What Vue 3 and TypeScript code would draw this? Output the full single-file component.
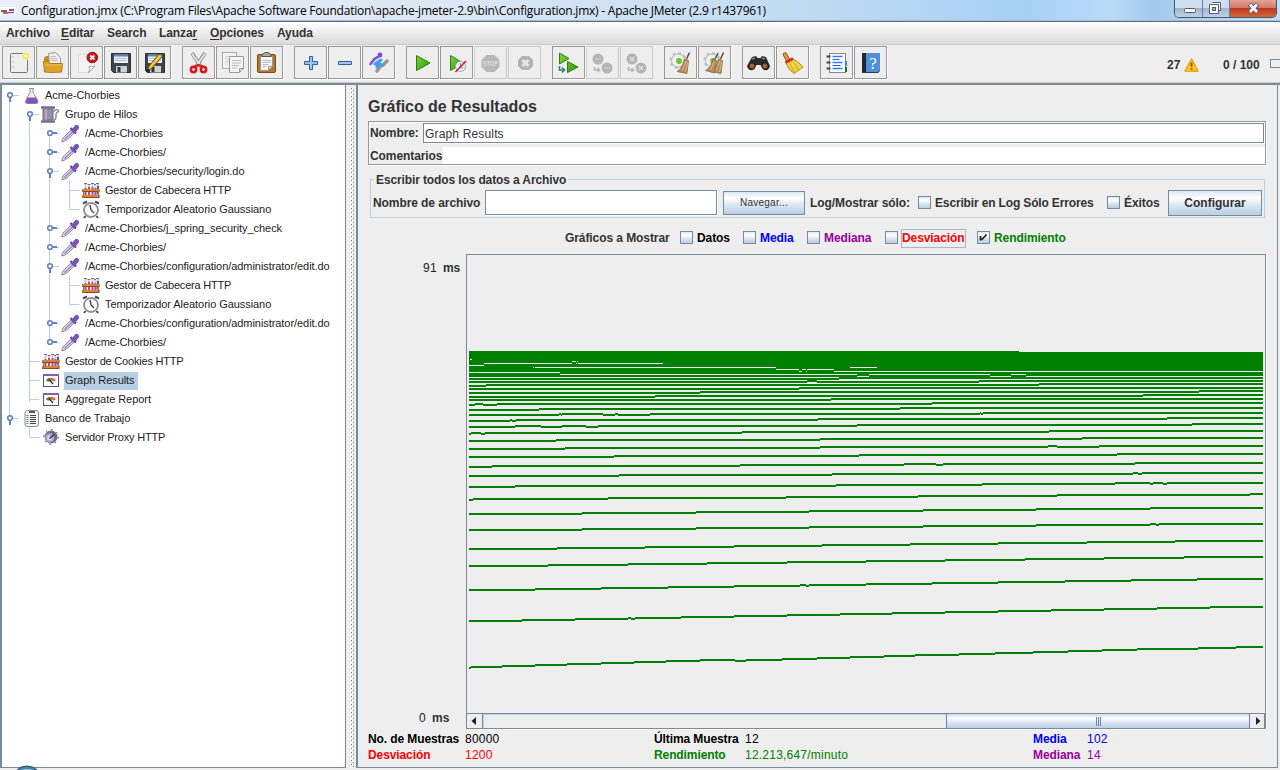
<script setup lang="ts">
type Step = [number, number]

const menus = [
  { pre: '', key: '', post: 'Archivo', w: 54 },
  { pre: '', key: 'E', post: 'ditar', w: 46 },
  { pre: '', key: '', post: 'Search', w: 52 },
  { pre: 'Lanza', key: 'r', post: '', w: 51 },
  { pre: '', key: 'O', post: 'pciones', w: 67 },
  { pre: '', key: '', post: 'Ayuda', w: 50 },
]

const toolGroups: { name: string; off?: boolean }[][] = [
  [{ name: 'new' }, { name: 'open' }, { name: 'close' }, { name: 'save' }, { name: 'saveas' }],
  [{ name: 'cut' }, { name: 'copy' }, { name: 'paste' }],
  [{ name: 'plus' }, { name: 'minus' }, { name: 'toggle' }],
  [{ name: 'start' }, { name: 'startnt' }, { name: 'stop', off: true }, { name: 'shutdown', off: true }],
  [{ name: 'rstart' }, { name: 'rstop', off: true }, { name: 'rshut', off: true }],
  [{ name: 'clear' }, { name: 'clearall' }],
  [{ name: 'search' }, { name: 'broom' }],
  [{ name: 'func' }, { name: 'help' }],
]

interface Node { d: number; icon: string; label: string; handle?: 'open' | 'closed'; sel?: boolean; tight?: boolean }
const nodes: Node[] = [
  { d: 0, icon: 'flask', label: 'Acme-Chorbies', handle: 'open' },
  { d: 1, icon: 'spool', label: 'Grupo de Hilos', handle: 'open' },
  { d: 2, icon: 'dropper', label: '/Acme-Chorbies', handle: 'closed' },
  { d: 2, icon: 'dropper', label: '/Acme-Chorbies/', handle: 'closed' },
  { d: 2, icon: 'dropper', label: '/Acme-Chorbies/security/login.do', handle: 'open' },
  { d: 3, icon: 'tubes', label: 'Gestor de Cabecera HTTP', tight: true },
  { d: 3, icon: 'clock', label: 'Temporizador Aleatorio Gaussiano' },
  { d: 2, icon: 'dropper', label: '/Acme-Chorbies/j_spring_security_check', handle: 'closed' },
  { d: 2, icon: 'dropper', label: '/Acme-Chorbies/', handle: 'closed' },
  { d: 2, icon: 'dropper', label: '/Acme-Chorbies/configuration/administrator/edit.do', handle: 'open' },
  { d: 3, icon: 'tubes', label: 'Gestor de Cabecera HTTP', tight: true },
  { d: 3, icon: 'clock', label: 'Temporizador Aleatorio Gaussiano' },
  { d: 2, icon: 'dropper', label: '/Acme-Chorbies/configuration/administrator/edit.do', handle: 'closed' },
  { d: 2, icon: 'dropper', label: '/Acme-Chorbies/', handle: 'closed' },
  { d: 1, icon: 'tubes', label: 'Gestor de Cookies HTTP', tight: true },
  { d: 1, icon: 'gauge', label: 'Graph Results', sel: true },
  { d: 1, icon: 'gauge', label: 'Aggregate Report' },
  { d: 0, icon: 'bench', label: 'Banco de Trabajo', handle: 'open' },
  { d: 1, icon: 'proxy', label: 'Servidor Proxy HTTP', tight: true },
]
const rowY = (i: number) => i * 19 + 9

const checks = [
  { label: 'Datos', color: 'black', w: 46 },
  { label: 'Media', color: 'blue', w: 47 },
  { label: 'Mediana', color: 'purple', w: 61 },
  { label: 'Desviación', color: 'red', w: 75, focus: true },
  { label: 'Rendimiento', color: 'green', w: 90, on: true },
]

const stats = [
  [['No. de Muestras', '80000', 'black'], ['Última Muestra', '12', 'black'], ['Media', '102', 'blue']],
  [['Desviación', '1200', 'red'], ['Rendimiento', '12.213,647/minuto', 'green'], ['Mediana', '14', 'purple']],
]

// Each trace: [start x, top y] pairs, extended to the right edge of the plot.
const even = (y0: number, y1: number): Step[] =>
  Array.from({ length: y0 - y1 + 1 }, (_, k) => [469 + Math.round((k * 794) / (y0 - y1 + 1)), y0 - k] as Step)
// Inserts a short one-pixel dip into a trace.
const dip = (t: Step[], x: number, w: number): Step[] => {
  const before = t.filter(s => s[0] < x)
  const y = before[before.length - 1][1]
  return [...before, [x, y + 1], [x + w, y], ...t.filter(s => s[0] > x + w)]
}
const traces: Step[][] = [
  [[469, 378], [839, 377]],
  [[469, 381], [807, 380], [817, 381], [979, 380]],
  [[469, 385], [486, 384], [1039, 383]],
  [[469, 388], [799, 387]],
  [[469, 392], [700, 391], [1199, 390]],
  [[469, 396], [655, 395], [1143, 394]],
  [[469, 399], [831, 398]],
  [[469, 404], [475, 403], [483, 404], [497, 403], [932, 402]],
  [[469, 409], [539, 408], [900, 407]],
  [[469, 414], [559, 413], [561, 414], [562, 413], [603, 414], [615, 413], [618, 414], [650, 413], [980, 412], [981, 413], [983, 412]],
  [[469, 420], [510, 419], [512, 420], [516, 419], [818, 418], [1167, 417]],
  [[469, 426], [515, 425], [541, 426], [562, 425], [586, 426], [598, 425], [857, 424], [1192, 423]],
  [[469, 433], [471, 432], [481, 433], [485, 432], [742, 431], [1049, 430]],
  [[469, 440], [556, 439], [820, 438], [1082, 437]],
  [[469, 448], [565, 447], [820, 446], [1048, 445], [1057, 446], [1099, 445]],
  [[469, 456], [614, 455], [859, 454], [1117, 453]],
  [[469, 466], [492, 465], [740, 464], [904, 463], [936, 464], [943, 463], [1135, 462]],
  [[469, 475], [619, 474], [832, 473], [1133, 472], [1138, 473], [1142, 472]],
  [[469, 486], [515, 485], [836, 484], [982, 483], [1115, 482], [1150, 483], [1153, 482], [1163, 483], [1167, 482]],
  [[469, 499], [473, 498], [608, 497], [786, 496], [918, 495], [1057, 494], [1250, 493]],
  even(513, 507), dip(even(529, 523), 1156, 3), even(548, 540), even(565, 556), dip(even(589, 578), 806, 3), dip(even(620, 606), 631, 4),
  [[469, 667], [471, 666], [502, 665], [535, 664], [567, 663], [601, 662], [634, 661], [666, 660], [700, 659], [735, 660], [746, 659], [782, 658], [817, 657], [850, 656], [884, 655], [915, 654], [959, 653], [995, 652], [1033, 651], [1068, 650], [1102, 649], [1137, 648], [1198, 647], [1236, 646]],
]
const segments = traces.flatMap(t =>
  t.map(([x, y], i) => ({ x: x - 467, y: y - 255, w: (i + 1 < t.length ? t[i + 1][0] : 1263) - x })))
const gaps: [number, number, number][] = [
  [470, 359, 2], [572, 361, 4], [577, 361, 1], [484, 363, 88], [576, 363, 1], [578, 363, 85], [469, 365, 15],
  [533, 367, 1], [535, 367, 241], [850, 367, 27], [776, 369, 23], [802, 369, 4], [807, 369, 27],
  [799, 371, 3], [806, 371, 1], [834, 371, 429], [469, 372, 91], [560, 374, 297], [869, 374, 121], [1011, 374, 15],
  [857, 376, 12], [990, 376, 21], [1026, 376, 237],
]
</script>

<template>
  <div class="window">
    <header class="titlebar">
      <svg class="feather" width="16" height="8" viewBox="0 0 16 8"><rect width="16" height="8" fill="#fff" /><path d="M1 4h6M9 3h5" stroke="#333" stroke-width="1.4" /><path d="M3 6h5" stroke="#d22" stroke-width="1.5" /><path d="M8 5.5h6" stroke="#a3c" stroke-width="1.3" /></svg>
      <span class="caption">Configuration.jmx (C:\Program Files\Apache Software Foundation\apache-jmeter-2.9\bin\Configuration.jmx) - Apache JMeter (2.9 r1437961)</span>
      <div class="winbtns">
        <i class="wb min"><svg width="29" height="17"><rect x="9.5" y="8.5" width="11" height="4" rx="1" fill="#fff" stroke="#555a6e" /></svg></i>
        <i class="wb max"><svg width="27" height="17"><path d="M9.500 2.500h8v8h-2M7.500 4.500h8v9h-9v-9z" fill="#fff" stroke="#555a6e" /><rect x="9.500" y="7.500" width="3" height="3" fill="#9db6d2" stroke="#555a6e" /></svg></i>
        <i class="wb cls"><svg width="47" height="17"><path d="M19.500 4l8 8.500M27.500 4l-8 8.500" stroke="#555a6e" stroke-width="4.600" /><path d="M20 4.500l7 7.500M27 4.500l-7 7.500" stroke="#fff" stroke-width="2.600" /></svg></i>
      </div>
    </header>

    <nav class="menubar">
      <span v-for="m in menus" :key="m.post + m.pre" class="menu" :style="{ width: m.w + 'px' }">{{ m.pre }}<u v-if="m.key">{{ m.key }}</u>{{ m.post }}</span>
    </nav>

    <div class="toolbar">
      <div v-for="(g, gi) in toolGroups" :key="gi" class="group">
        <div v-for="t in g" :key="t.name" class="tool" :class="{ off: t.off }">
          <svg width="33" height="33" viewBox="0 0 33 33" fill="none">
            <template v-if="t.name === 'new'">
              <rect x="8.500" y="7.500" width="17" height="19" rx="1" fill="#eee" stroke="#777" /><path d="M11 10v14" stroke="#bbb" stroke-dasharray="2 3" /><circle cx="24" cy="10" r="4" fill="#f7f19a" /><circle cx="24" cy="10" r="2.200" fill="#fffff0" stroke="#e6d935" />
            </template>
            <template v-else-if="t.name === 'open'">
              <path d="M8 12l2-2h4v6H8z" fill="#c48a1c" /><path d="M12.500 7.500l7-1 5 5v8h-11z" fill="#eee" stroke="#999" /><path d="M14.500 10.500h5M14.500 12.500h7M14.500 14.500h7" stroke="#bbb" /><path d="M7.500 15.500h4l2 2h13l-1 8.500q-8 1-17 0z" fill="#dfa32c" stroke="#b67b12" /><path d="M9 19h16.500" stroke="#efc15c" />
            </template>
            <template v-else-if="t.name === 'close'">
              <path d="M8.500 8.500h16v12l-5 6h-11z" fill="#f3f3f3" stroke="#ddd" /><path d="M25 20q-2 1-6 .500 1.500 3-.500 6z" fill="#fff" stroke="#aaa" /><circle cx="22.300" cy="11.500" r="5.300" fill="#c91717" stroke="#9d1111" /><path d="M20.300 9.500l4 4m0-4l-4 4" stroke="#fff" stroke-width="1.800" />
            </template>
            <template v-else-if="t.name === 'save' || t.name === 'saveas'">
              <path d="M7.500 7.500h19v19h-17l-2-2z" fill="#3d444b" stroke="#2b3035" /><rect x="10" y="8" width="14" height="9" fill="#e9eff4" /><rect x="10" y="8" width="14" height="2.500" fill="#5c84ad" /><path d="M11 12.500h12M11 14.500h12" stroke="#b9c1c8" /><rect x="12" y="20" width="11" height="6.500" fill="#cfd2d4" /><rect x="13.500" y="21" width="3" height="5" fill="#30363b" />
              <template v-if="t.name === 'saveas'"><path d="M9 25l2-5L21 8l3.500 2.500L13 23z" fill="#e8b52c" stroke="#6f5010" /><path d="M12 21.500L22.500 9.500" stroke="#fbe28a" /><path d="M8 26.500l1.500-4 3 2z" fill="#222" /></template>
            </template>
            <template v-else-if="t.name === 'cut'">
              <path d="M10 7l9 14M23 7l-9 14" stroke="#888" stroke-width="3.600" /><path d="M10 7.500l9 13M23 7.500l-9 13" stroke="#e6e6e6" stroke-width="2" /><ellipse cx="11.500" cy="23.500" rx="2.600" ry="2.600" stroke="#d81b1b" stroke-width="2.600" /><ellipse cx="21.500" cy="23.500" rx="2.600" ry="2.600" stroke="#d81b1b" stroke-width="2.600" /><path d="M12.500 20.500l4-1.500 4 1.500" stroke="#d81b1b" stroke-width="2.200" />
            </template>
            <template v-else-if="t.name === 'copy'">
              <rect x="6.500" y="6.500" width="14" height="16" fill="#f4f4f4" stroke="#aaa" /><path d="M9 10.500h9M9 13h9M9 15.500h4M9 18h3" stroke="#ccc" /><path d="M13.500 10.500h14v12l-4 4h-10z" fill="#f6f6f6" stroke="#999" /><path d="M16 14.500h9M16 17h9M16 19.500h7M16 22h5" stroke="#bbb" /><path d="M27 22.500h-3.500V26z" fill="#fff" stroke="#999" />
            </template>
            <template v-else-if="t.name === 'paste'">
              <rect x="7.500" y="8.500" width="18" height="18" rx="1.500" fill="#b5762a" stroke="#7b4b12" /><path d="M10.500 10.500h12v10l-4 4h-8z" fill="#f8f8f8" stroke="#999" /><path d="M12.500 14.500h8M12.500 16.500h8M12.500 18.500h6M12.500 20.500h4" stroke="#bbb" /><path d="M22.500 20.500h-4v4z" fill="#ddd" stroke="#999" /><path d="M12 10.500v-2l3-2h3l3 2v2z" fill="#aaa" stroke="#555" />
            </template>
            <path v-else-if="t.name === 'plus'" d="M15.500 10.500h3v5h5v3h-5v5h-3v-5h-5v-3h5z" fill="#9cc2ea" stroke="#2d62a8" stroke-linejoin="round" />
            <path v-else-if="t.name === 'minus'" d="M10.500 15.500h13v3h-13z" fill="#a8c6ea" stroke="#2d62a8" stroke-linejoin="round" />
            <template v-else-if="t.name === 'toggle'">
              <path d="M15 25l3-4M17 21l4-2 4-4" stroke="#999" stroke-width="3.600" stroke-linecap="round" /><path d="M8.500 18l4-5 5-3" stroke="#7352cf" stroke-width="2.600" stroke-linecap="round" /><circle cx="18" cy="9" r="2.400" fill="#8149d8" /><path d="M13 18l6-4M15 21l1-4 4 2" stroke="#3d9df2" stroke-width="3" stroke-linecap="round" />
            </template>
            <path v-else-if="t.name === 'start'" d="M10.500 9.500L24 17l-13.500 7.500z" fill="url(#gg)" stroke="#2e7d0e" stroke-linejoin="round" />
            <template v-else-if="t.name === 'startnt'">
              <path d="M10.500 9.500L23 17l-12.500 7.500z" fill="url(#gg)" stroke="#2e7d0e" stroke-linejoin="round" /><circle cx="20.500" cy="20.500" r="5" fill="#f0f4f8" stroke="#8fa9c4" /><path d="M20.500 17v4l2.500 1.500" stroke="#6785a6" /><path d="M15.500 26L26 15" stroke="#d41414" stroke-width="1.500" />
            </template>
            <template v-else-if="t.name === 'stop'">
              <path d="M12.500 9h8l5 5v7l-5 5h-8l-5-5v-7z" fill="#b9b9b9" /><text x="16.500" y="20.200" text-anchor="middle" class="stoptxt" textLength="15" lengthAdjust="spacingAndGlyphs">STOP</text>
            </template>
            <template v-else-if="t.name === 'shutdown'">
              <path d="M14 10h7l4 4v6l-4 4h-7l-4-4v-6z" fill="#b3b3b3" /><path d="M14.500 14l6 6m0-6l-6 6" stroke="#e8e8e8" stroke-width="2.600" />
            </template>
            <template v-else-if="t.name === 'rstart'">
              <path d="M7.500 7L17 12.500 7.500 18zM15.500 15.500L26 21l-10.500 5.500z" fill="url(#gg)" stroke="#2e7d0e" stroke-linejoin="round" /><path d="M7.500 20v4h5m-2.500-2.500l2.500 2.500-2.500 2.500" stroke="#2c7e92" stroke-width="1.600" />
            </template>
            <template v-else-if="t.name === 'rstop' || t.name === 'rshut'">
              <circle cx="12" cy="13" r="5.500" fill="#b5b5b5" /><circle cx="21" cy="22" r="5.500" fill="#b5b5b5" /><path d="M8.500 21v3h5m-2-2l2 2-2 2" stroke="#b5b5b5" stroke-width="1.600" /><path v-if="t.name === 'rshut'" d="M10 11l4 4m0-4l-4 4M19 20l4 4m0-4l-4 4" stroke="#ddd" stroke-width="1.600" /><path v-else d="M9 13h6M18 22h6" stroke="#c6c6c6" stroke-width="2" />
            </template>
            <template v-else-if="t.name === 'clear' || t.name === 'clearall'">
              <circle cx="14" cy="14.500" r="7.300" stroke="#c2c2c2" stroke-width="2.600" stroke-dasharray="3 2.730" /><circle cx="14" cy="14.500" r="6.500" fill="#f0f0f0" stroke="#b5b5b5" /><circle cx="15" cy="15" r="2.900" fill="#6fc437" /><path d="M25.500 6.500L22.500 13" stroke="#6b4a2b" stroke-width="1.500" /><path d="M20.500 13l4 1.500L23 27.500l-10-2c4-2 6-7 7.500-12.500z" fill="#b58a5c" stroke="#8e683f" stroke-width=".8" /><path d="M22 15l-4 10M23.500 16l-2 10" stroke="#dcbd92" />
              <template v-if="t.name === 'clearall'"><path d="M20 7l-3 6" stroke="#6b4a2b" stroke-width="1.500" /><path d="M15 13l3.500 1.500-2 12.500-9-2.500c4-2 6.500-6 7.500-11.500z" fill="#b58a5c" stroke="#8e683f" stroke-width=".8" /><path d="M16.500 15l-4 9" stroke="#dcbd92" /></template>
            </template>
            <template v-else-if="t.name === 'search'">
              <path d="M10 11l4-1 1.500 2h3L20 10l4 1 4 9q-1 5-6 4l-3.500-5h-4L11 24q-5 1-6-4z" fill="#2c2c2c" /><circle cx="10" cy="20" r="3.200" fill="#a55c34" stroke="#111" /><circle cx="23" cy="20" r="3.200" fill="#a55c34" stroke="#111" /><path d="M10 13l3-1M20 12l3 1" stroke="#888" stroke-width="1.400" />
            </template>
            <template v-else-if="t.name === 'broom'">
              <path d="M9 8.500L12 14" stroke="#8e5a12" stroke-width="4.500" stroke-linecap="round" /><path d="M9 8.500L12 14" stroke="#e0a53a" stroke-width="2.600" stroke-linecap="round" /><path d="M10 17l7-4q6 3 10 8l-9 6.500q-6-4-8-10.500z" fill="#f0d444" stroke="#a98d10" /><path d="M9.500 16.500l7.500-4" stroke="#d22" stroke-width="2.600" /><path d="M14 18l4 8M17.500 16.500l5 7" stroke="#c9a81d" />
            </template>
            <template v-else-if="t.name === 'func'">
              <rect x="9.500" y="7.500" width="16" height="19" fill="#fff" stroke="#888" /><path d="M12.500 10.500h10M12.500 16.500h10M12.500 22.500h10" stroke="#2e7dff" stroke-width="1.600" /><path d="M12.500 13.500h7M12.500 19.500h8" stroke="#1764e6" /><path d="M6.500 10.500h4M6.500 16.500h4M6.500 22.500h4" stroke="#444" stroke-width="2" /><path d="M26 15v5" stroke="#2e7dff" stroke-width="2" /><path d="M26 21v5" stroke="#137a13" stroke-width="2" />
            </template>
            <template v-else>
              <path d="M8 8h18v17l-2 2H8z" fill="#333a44" /><path d="M12 7h14v17l-2 2H12z" fill="#4f8fdc" /><path d="M8 7h4v19H8z" fill="#1c2738" /><text x="19" y="23" text-anchor="middle" class="qtxt">?</text>
            </template>
          </svg>
        </div>
      </div>
      <div class="status">
        <b class="s27">27</b>
        <svg width="15" height="14" viewBox="0 0 15 14"><path d="M7.500.800L14.200 13.200H.800z" fill="#fcc91c" stroke="#e08c0c" stroke-linejoin="round" /><path d="M7.500 4.500v4.200M7.500 10v1.800" stroke="#a3480c" stroke-width="1.800" /></svg>
        <b class="s100">0 / 100</b>
        <i class="led"></i>
      </div>
    </div>

    <main class="body">
      <aside class="tree">
        <svg class="links" width="90" height="365" viewBox="0 0 90 365" fill="none">
          <g stroke="#b8cfe5"><path d="M7.500 12v320M27.500 31v285M47.500 50v207M67.500 95v28M67.500 190v28M27.500 340v11" /></g>
          <template v-for="(n, i) in nodes" :key="i">
            <path v-if="!n.handle" :d="`M${n.d * 20 + 7.5} ${rowY(i) + .5}h10`" stroke="#b8cfe5" />
            <g v-else>
              <path :d="`M${n.d * 20 + 8} ${rowY(i) + .5}h9`" stroke="#b8cfe5" />
              <path :d="n.handle === 'open' ? `M${n.d * 20 + 8} ${rowY(i)}v7` : `M${n.d * 20 + 8} ${rowY(i)}h7`" stroke="#6382bf" stroke-width="2" />
              <circle :cx="n.d * 20 + 8" :cy="rowY(i)" r="2.300" fill="#fff" stroke="#6382bf" stroke-width="1.600" />
            </g>
          </template>
        </svg>
        <div v-for="(n, i) in nodes" :key="i" class="row" :class="'d' + n.d">
          <svg class="nicon" width="20" height="19" viewBox="0 0 20 19" fill="none">
            <template v-if="n.icon === 'flask'"><path d="M8 2.500h5M9 2.500v4L4.500 14.500q-1 3 2 3h8.500q3 0 2-3L12 6.500v-4" fill="#eee" stroke="#9a93a8" /><path d="M6.500 11.500h8.500l1.800 4q0 2-1.800 2H6.500q-2 0-1.800-2z" fill="#7d57b5" /></template>
            <template v-else-if="n.icon === 'spool'"><path d="M0 2.500h14M0 16.500h14" stroke="#776f85" stroke-width="2.500" /><path d="M2 4h10v11H2z" fill="#9b8fab" stroke="#6e667d" /><path d="M5 4v11" stroke="#c9c2d3" /><path d="M12 7q4-4 5.500-1.500Q18 7 16.500 7 14.500 8 15 11t-2 4" stroke="#8d849c" stroke-width="1.300" /></template>
            <template v-else-if="n.icon === 'dropper'"><path d="M.800 18q0-3 2.500-5.500l7.500-7 3 3-7.500 7q-2.500 2-5.500 2.500z" fill="#dcd7e6" stroke="#8d8799" /><path d="M3.500 15.500l8-7.500" stroke="#9d83c6" stroke-width="1.200" /><path d="M9.500 4l5.500 5.500" stroke="#54477a" stroke-width="2.200" /><path d="M13 6.500L15.500 3.500" stroke="#7a55b8" stroke-width="5" stroke-linecap="round" /></template>
            <template v-else-if="n.icon === 'tubes'"><path d="M3 2.500h3M6.500 3.500h3M10 2.500h3M13 3.500h2M15 2.500h3" stroke="#77727f" /><g stroke-width="2"><path d="M4.500 3v11M8 4v10M11.500 3v11M14.500 4v10M17 3v11" stroke="#cfc8da" /><path d="M4.500 7v7M14.500 7v7" stroke="#7f5bc0" /><path d="M8 6v8" stroke="#e0404c" /><path d="M11.500 6v8" stroke="#b04fa0" /><path d="M17 5v8" stroke="#4a55cf" /></g><path d="M1 9.500h17.500M1 15.500h17.500" stroke="#8a4a1a" stroke-width="3" /><path d="M1 9h17.500M1 15h17.500" stroke="#dc8436" stroke-width="1.800" /><path d="M2.500 9v8M17.500 9v7" stroke="#b86a28" stroke-width="1.200" /></template>
            <template v-else-if="n.icon === 'clock'"><path d="M2 3.500l4-2M14 1.500l4 2M4.500 16L3 18M15.500 16l1.500 2" stroke="#4d4a52" stroke-width="2" /><circle cx="10" cy="10" r="7" fill="#fff" stroke="#918c9c" stroke-width="1.800" /><path d="M9 5l1 5 3 3" stroke="#444" stroke-width="1.400" /></template>
            <template v-else-if="n.icon === 'gauge'"><rect x="2.500" y="3.500" width="15" height="12" fill="#fff" stroke="#5c4790" /><path d="M2 4h16" stroke="#7a62b5" stroke-width="2" /><path d="M5 9q5-4.500 10 0l-2 1.800q-3-2.500-6 0z" fill="#e0652a" /><path d="M5 9q1.500-1.600 3-2l1 2.400-2 1.400z" fill="#2b9c41" /><path d="M8 8.500l4 4.500" stroke="#222" stroke-width="1.300" /></template>
            <template v-else-if="n.icon === 'bench'"><rect x="4" y="1.500" width="13.500" height="16" rx="2.500" fill="#f4f4f4" stroke="#8b8b90" /><path d="M8 2h6v2H8z" fill="#555" /><path d="M9 6.500h6M9 8.500h6M9 10.500h6M9 12.500h6M9 14.500h6" stroke="#444" /><path d="M5.500 6.500h2M5.500 8.500h2M5.500 10.500h2M5.500 12.500h2M5.500 14.500h2" stroke="#43a048" /></template>
            <template v-else><circle cx="10" cy="9" r="7.300" stroke="#333" stroke-width="1" stroke-dasharray="1.500 4.230" /><circle cx="10" cy="9" r="6.500" fill="#75658c" /><circle cx="8.800" cy="9.800" r="4.600" fill="#b5a8c6" /><circle cx="8.500" cy="10" r="2.300" fill="#e2dbea" /><path d="M8.500 10.500l4.500-4" stroke="#3b3544" stroke-width="1.600" /></template>
          </svg>
          <span class="nlabel" :class="{ sel: n.sel, tight: n.tight }">{{ n.label }}</span>
        </div>
      </aside>
      <div class="splitter"><svg width="4" height="679"><defs><pattern id="dots" width="4" height="4" patternUnits="userSpaceOnUse"><rect width="1" height="1" fill="#7b7b7b" /><rect x="2" y="2" width="1" height="1" fill="#7b7b7b" /><rect x="1" y="1" width="1" height="1" fill="#fff" /><rect x="3" y="3" width="1" height="1" fill="#fff" /></pattern></defs><rect width="4" height="679" fill="url(#dots)" /></svg></div>

      <section class="panel">
        <h1>Gráfico de Resultados</h1>
        <div class="namebox">
          <div class="r1"><label>Nombre:</label><div class="field name">Graph Results</div></div>
          <div class="r2"><label>Comentarios</label><div class="plain"></div></div>
        </div>
        <div class="filebox">
          <span class="legend">Escribir todos los datos a Archivo</span>
          <div class="frow">
            <label class="l1">Nombre de archivo</label>
            <div class="field ff"></div>
            <button class="nav">Navegar...</button>
            <label class="l2">Log/Mostrar sólo:</label>
            <i class="cb"></i><label class="l3">Escribir en Log Sólo Errores</label>
            <i class="cb"></i><label class="l4">Éxitos</label>
            <button class="conf">Configurar</button>
          </div>
        </div>
        <div class="checks">
          <label class="lead">Gráficos a Mostrar</label>
          <template v-for="c in checks" :key="c.label">
            <i class="cb"><svg v-if="c.on" width="11" height="11"><path d="M2.500 4v4.500M3.500 8L8.500 2.500" stroke="#222" stroke-width="1.800" fill="none" /></svg></i>
            <label :class="[c.color, { focus: c.focus }]" :style="{ width: c.w + 'px' }"><span>{{ c.label }}</span></label>
          </template>
        </div>
        <div class="chart">
          <div class="axis"><div class="top"><span>91</span><b>ms</b></div><div class="bot"><span>0</span><b>ms</b></div></div>
          <div class="plotbox">
            <svg class="plot" width="798" height="458" viewBox="0 0 798 458" shape-rendering="crispEdges">
              <g fill="#008000">
                <rect x="2" y="96" width="550" height="1" /><rect x="2" y="97" width="794" height="25" />
                <rect v-for="(s, i) in segments" :key="i" :x="s.x" :y="s.y" :width="s.w" height="2" />
              </g>
              <rect v-for="(g, i) in gaps" :key="'g' + i" :x="g[0] - 467" :y="g[1] - 255" :width="g[2]" height="1" fill="#eee" />
            </svg>
            <div class="scroll">
              <i class="arr"><svg width="15" height="14"><path d="M9 3v8L4.500 7z" fill="#222" /></svg></i>
              <i class="track"></i>
              <i class="thumb"><b></b><b></b><b></b></i>
              <i class="arr right"><svg width="15" height="14"><path d="M6 3v8l4.500-4z" fill="#222" /></svg></i>
            </div>
          </div>
        </div>
        <div class="stats">
          <div v-for="(r, i) in stats" :key="i" class="srow">
            <template v-for="c in r" :key="c[0]"><b :class="c[2]">{{ c[0] }}</b><span :class="c[2]">{{ c[1] }}</span></template>
          </div>
        </div>
      </section>
      <div class="edge"></div>
    </main>
    <svg class="orb" width="30" height="5"><circle cx="15" cy="16" r="15" fill="#4f86a8" stroke="#23465f" /><circle cx="15" cy="17" r="13" fill="#9fd0e6" /></svg>
    <svg width="0" height="0" class="defs"><defs><linearGradient id="gg" x1="0" y1="0" x2="1" y2="1"><stop offset="0" stop-color="#7ed43c" /><stop offset="1" stop-color="#2d9a10" /></linearGradient></defs></svg>
  </div>
</template>

<style>
body { overflow: hidden; }
</style>
<style scoped>
.window { width: 1280px; height: 770px; overflow: hidden; position: relative; background: #eee; font: 12px/15px "Liberation Sans", Arial, sans-serif; color: #333; white-space: nowrap; display: flex; flex-direction: column; }
.window * { box-sizing: border-box; }
svg { display: block; flex: none; }
i { font-style: normal; display: block; flex: none; }
.titlebar { height: 21px; flex: none; display: flex; align-items: center; background: linear-gradient(90deg, #e9eff7 0, #dce7f2 35%, #c3dcf3 60%, #a9d0f3 80%, #b9dbf8 87%, #a3c9ec 90%, #bfdffb 100%); border-bottom: 1px solid #a9bdd2; color: #000; }
.feather { margin-top: 2px; }
.caption { font: 12px/16px "Open Sans", "Noto Sans", sans-serif; margin: 1px 0 0 5px; width: 1153px; letter-spacing: -0.225px; }
.winbtns { display: flex; align-self: flex-start; height: 18px; width: 103px; border: 1px solid #48566a; border-top: 0; border-radius: 0 0 5px 5px; overflow: hidden; }
.wb { height: 17px; }
.wb.min { width: 28px; background: linear-gradient(#cfdeee 0 45%, #9fb6cf 50%, #bdd2e8); border-right: 1px solid #6f8196; }
.wb.max { width: 27px; background: linear-gradient(#cfdeee 0 45%, #9fb6cf 50%, #bdd2e8); border-right: 1px solid #6f8196; }
.wb.cls { width: 47px; background: linear-gradient(#e5a498 0, #d4786a 45%, #bd3a20 50%, #d3663f); }
.menubar { height: 24px; flex: none; border-top: 1px solid #5e6c7c; border-bottom: 1px solid #ccc; background: linear-gradient(#fff, #dadada); display: flex; align-items: center; padding-left: 6px; font-weight: bold; letter-spacing: -0.1px; }
.menu { flex: none; }
.menu + .menu { position: static; }
.menu:first-child { margin-right: 1px; }
.menubar u { text-underline-offset: 2px; }
.toolbar { height: 38px; flex: none; display: flex; padding: 1px 0 0 2px; border-bottom: 1px solid #ccc; }
.group { display: flex; gap: 1px; margin-right: 11px; }
.tool { width: 33px; height: 33px; box-shadow: inset 0 0 0 1px #999, 1px 1px 0 #fff; }
.tool.off { box-shadow: inset 0 0 0 1px #ccc; }
.stoptxt { font: bold 6.500px "Liberation Sans", sans-serif; fill: #ddd; }
.qtxt { font: 17px "Liberation Serif", serif; fill: #fff; }
.status { display: flex; align-items: center; height: 37px; margin-left: auto; width: 113px; }
.s27 { width: 17px; padding-top: 1px; }
.s100 { margin-left: 24px; width: 46px; padding-top: 1px; }
.led { width: 10px; height: 9px; border: 1px solid #7a8a99; border-right: 0; margin-left: 1px; margin-top: -2px; background: #e8f1f8; }
.body { flex: 1; display: flex; border-top: 2px solid #7a8a99; height: 687px; }
.tree { width: 346px; height: 683px; flex: none; position: relative; background: #fff; border-left: 2px solid #7a8a99; border-right: 1px solid #7a8a99; border-bottom: 1px solid #7a8a99; padding-top: 1px; }
.links { position: absolute; left: 0; top: 1px; }
.row { height: 19px; display: flex; align-items: center; font-size: 11px; }
.d0 { padding-left: 19px; } .d1 { padding-left: 39px; } .d2 { padding-left: 59px; } .d3 { padding-left: 79px; }
.nicon { position: relative; }
.nlabel { color: #222; padding: 0 3px 0 1px; line-height: 17px; height: 18px; margin-left: 3px; letter-spacing: -0.06px; }
.tight { letter-spacing: -0.2px; }
.sel { background: #b8cfe5; }
.splitter { width: 10px; flex: none; padding: 3px 0 0 5px; }
.panel { width: 922px; height: 683px; flex: none; border-left: 2px solid #7a8a99; border-right: 1px solid #7a8a99; border-bottom: 1px solid #7a8a99; padding: 0 11px 0 10px; }
h1 { margin: 12px 0 4px; font: bold 16px/20px "Liberation Sans", sans-serif; height: 20px; letter-spacing: -0.05px; }
.panel label { font-weight: bold; flex: none; letter-spacing: -0.08px; }
.namebox { height: 44px; border: 1px solid #999; box-shadow: 1px 1px 0 #fff, inset 1px 1px 0 #fff; display: flex; flex-direction: column; justify-content: space-between; width: 898px; }
.r1 { display: flex; align-items: center; padding: 1px 1px 0; }
.r1 label { width: 53px; padding-top: 1px; }
.field { border: 1px solid #7a8a99; background: #fff; height: 20px; line-height: 20px; flex: 1; padding-left: 1px; box-shadow: 1px 1px 0 #fff; }
.name { letter-spacing: 0.16px; }
.r2 { display: flex; height: 17px; padding-left: 1px; line-height: 19px; }
.r2 label { width: 73px; }
.plain { flex: 1; background: #fff; }
.filebox { position: relative; margin: 14px 0 0 2px; height: 39px; width: 895px; border: 1px solid #b8cfe5; }
.legend { position: absolute; left: 3px; top: -7px; background: #eee; padding: 0 2px; line-height: 15px; font-weight: bold; letter-spacing: -0.12px; }
.frow { display: flex; align-items: center; padding: 9px 0 0 2px; height: 36px; }
.frow label { padding-top: 1px; }
.l1 { width: 112px; }
.frow .ff { flex: none; width: 232px; height: 25px; }
button { font-family: inherit; color: #333; border: 1px solid #7a8a99; border-radius: 0; padding: 0; background: linear-gradient(#dde8f3 0, #fff 30%, #dfe9f4 55%, #b8cfe5 100%); flex: none; }
.nav { width: 82px; height: 24px; margin: 0 5px 0 6px; font-size: 10px; letter-spacing: 0.25px; }
.l2 { width: 108px; }
.cb { width: 13px; height: 13px; border: 1px solid #7a8a99; background: linear-gradient(#dde8f3 0, #fff 30%, #dfe9f4 55%, #b8cfe5 100%); }
.l3 { margin-left: 4px; width: 172px; }
.frow .l3 { letter-spacing: -0.15px; }
.l4 { margin-left: 4px; width: 44px; }
.conf { width: 94px; height: 26px; font-weight: bold; font-size: 12px; }
.checks { display: flex; align-items: center; height: 18px; margin-top: 10px; padding-left: 197px; }
.checks label { padding-top: 2px; }
.lead { width: 115px; }
.checks .cb + label { margin-left: 4px; }
.focus span { box-shadow: 0 0 0 1px #a3b8cc; padding: 1px 0 2px; }
.black { color: #000; } .blue { color: #00f; } .purple { color: #990099; } .red { color: #f00; } .green { color: #008000; }
.chart { display: flex; margin-top: 8px; height: 475px; }
.axis { width: 98px; flex: none; display: flex; flex-direction: column; justify-content: space-between; padding: 7px 0 3px; }
.axis div { display: flex; gap: 6px; }
.axis span { letter-spacing: 0.3px; color: #222; }
.top { padding-left: 55px; } .bot { padding-left: 51px; }
.plotbox { width: 800px; border: 1px solid #7a8a99; box-shadow: 1px 1px 0 #fff; }
.scroll { height: 15px; border-top: 1px solid #7a8a99; display: flex; }
.arr { width: 16px; border-right: 1px solid #7a8a99; }
.track { width: 463px; box-shadow: inset 1px 1px 0 #b8cfe5; }
.thumb { width: 304px; border: 1px solid #6382bf; border-width: 0 1px; background: linear-gradient(#c9daea 0, #fff 30%, #dfe9f4 55%, #b8cfe5 100%); display: flex; gap: 1px; align-items: center; justify-content: center; }
.thumb b { width: 1px; height: 9px; background: #6382bf; }
.arr.right { width: 15px; }
.stats { padding-top: 2px; }
.srow { display: grid; grid-template-columns: 97px 189px 91px 288px 54px 100px; height: 16px; line-height: 16px; }
.srow b { letter-spacing: -0.1px; }
.srow span { letter-spacing: 0.22px; }
.edge { flex: 1; }
.orb { position: absolute; left: 12px; top: 765px; }
.defs { position: absolute; }
</style>
